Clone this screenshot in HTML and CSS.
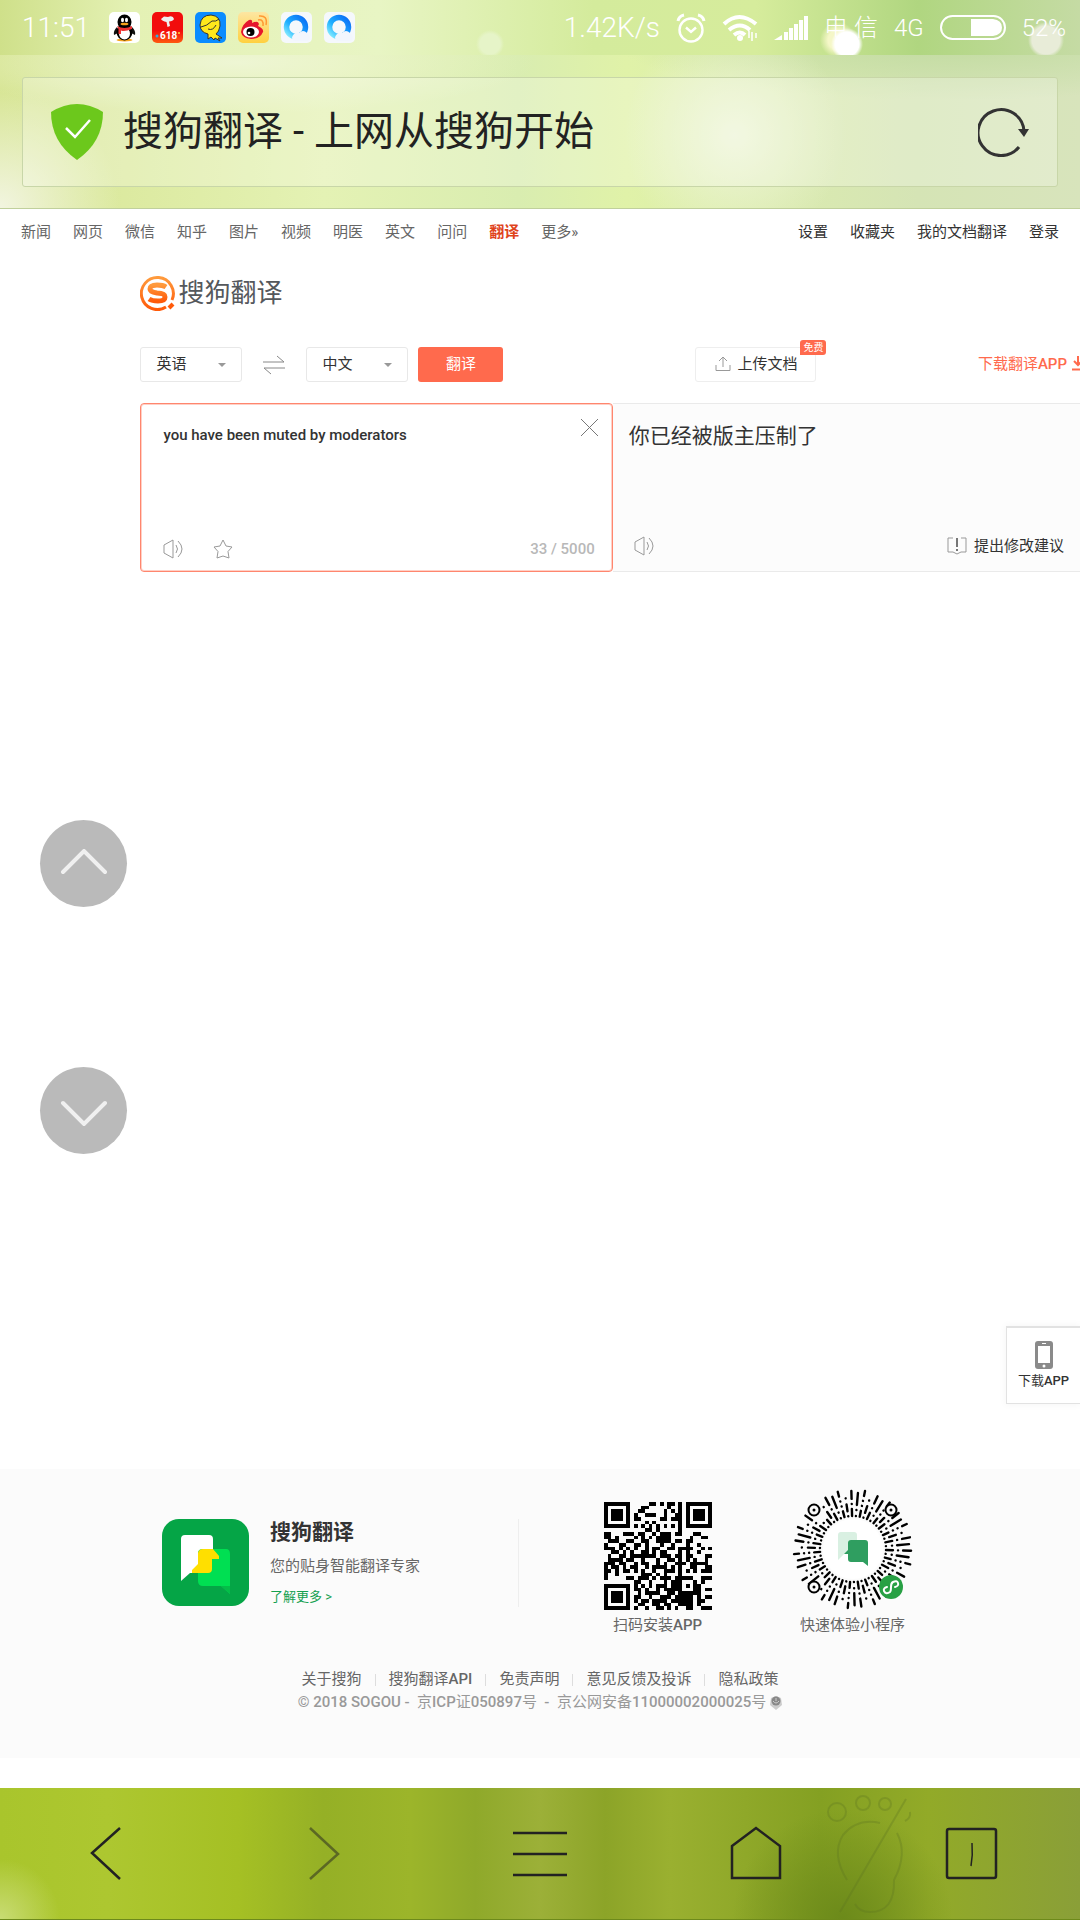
FILE: index.html
```html
<!DOCTYPE html>
<html lang="zh-CN">
<head>
    <meta charset="utf-8">
    <meta name="viewport" content="width=device-width, initial-scale=1">
    <title>搜狗翻译 - 上网从搜狗开始</title>
    <link rel="stylesheet" href="styles.css">
</head>
<body>
    <header class="browser-top">
        <div class="status-bar">
            <span class="clock">11:51</span>
            <div class="app-icons">
                <svg viewBox="0 0 31 31"><rect width="31" height="31" rx="5" fill="#fff"/><ellipse cx="15.5" cy="28" rx="8" ry="1.5" fill="#f5a21b"/><path d="M8 15Q4 19 5 23L9 21M23 15Q27 19 26 23L22 21" fill="#111"/><ellipse cx="15.5" cy="20" rx="8" ry="8.5"/><ellipse cx="15.5" cy="21.5" rx="5.5" ry="6" fill="#fff"/><ellipse cx="15.5" cy="10" rx="7" ry="7.5"/><ellipse cx="13.5" cy="8" rx="1.5" ry="2.2" fill="#fff"/><ellipse cx="17.5" cy="8" rx="1.5" ry="2.2" fill="#fff"/><ellipse cx="15.5" cy="12" rx="4" ry="1.3" fill="#f5a21b"/><path d="M8 14Q15.5 18 23 14V17Q15.5 20 12 18.5V22H9.5V17Z" fill="#e33"/></svg>
                <svg viewBox="0 0 31 31"><defs><linearGradient id="jd" x2="0" y2="1"><stop offset=".6" stop-color="#f20c0c"/><stop offset="1" stop-color="#ff5a10"/></linearGradient></defs><rect width="31" height="31" rx="5" fill="url(#jd)"/><path d="M9 7L12 4.5L16 5Q21 3 22 7Q21 9 17 9.5L18 14L15.5 15L14.5 10Q10 9 9 7Z" fill="#eee"/><text x="8" y="27" class="badge-618">618</text><circle cx="5" cy="24" r="1.5" fill="#3ad"/><circle cx="27" cy="21" r="1" fill="#fd3"/></svg>
                <svg viewBox="0 0 31 31"><rect width="31" height="31" rx="5" fill="#0a8cff"/><path d="M5 13Q6 3 16 3Q26 4 25 14Q24 20 21 22L27 26L23 26L25 29L20 26L19 28L16 25L13 27L13 22Q5 20 5 13Z" fill="#ffe81c" stroke="#333" stroke-width="1"/><path d="M6 15Q12 14 17 9M13 17Q18 19 21 13M17 9Q21 10 24 7" fill="none" stroke="#333"/></svg>
                <svg viewBox="0 0 31 31"><defs><linearGradient id="wb" x2="0" y2="1"><stop stop-color="#fde6a2"/><stop offset="1" stop-color="#ffd040"/></linearGradient></defs><rect width="31" height="31" rx="5" fill="url(#wb)"/><path d="M3 20Q4 12 11 8Q15 7 14 11Q20 8 21 12L20 14Q26 17 25 20Q22 27 13 27Q4 26 3 20Z" fill="#e6162d"/><ellipse cx="13" cy="20" rx="8" ry="5.5" fill="#fff"/><circle cx="12.5" cy="20" r="4"/><circle cx="11" cy="21" r="1.3" fill="#fff"/><path d="M20 8Q26 7 25 14M21 4Q30 3 28 13" fill="none" stroke="#ff9933" stroke-width="1.5"/></svg>
                <svg viewBox="0 0 31 31"><defs><linearGradient id="qb" x1="1" x2="0" y2="1"><stop stop-color="#0a6cf5"/><stop offset=".6" stop-color="#1fb0ff"/><stop offset="1" stop-color="#8ef0ff"/></linearGradient></defs><rect width="31" height="31" rx="5" fill="#f5f8fc"/><circle cx="15" cy="15" r="9.5" fill="none" stroke="url(#qb)" stroke-width="5.5"/><path d="M13 29Q9 26 13 22Q15 20 18 21Q22 17 26 21Q31 24 27 29Z" fill="#f2f6fd"/></svg>
                <svg viewBox="0 0 31 31"><rect width="31" height="31" rx="5" fill="#f5f8fc"/><circle cx="15" cy="15" r="9.5" fill="none" stroke="url(#qb)" stroke-width="5.5"/><path d="M13 29Q9 26 13 22Q15 20 18 21Q22 17 26 21Q31 24 27 29Z" fill="#f2f6fd"/></svg>
            </div>
            <div class="signals">
                <span class="speed">1.42K/s</span>
                <svg width="30" height="30" viewBox="0 0 30 30"><g fill="none" stroke="#fff" stroke-width="2.4"><circle cx="15" cy="17" r="11.5"/><path d="M10 14.5L15 19L20 14.5"/><path d="M2 8Q3 3 8 2M28 8Q27 3 22 2" stroke-width="3"/></g></svg>
                <svg width="36" height="28" viewBox="0 0 36 28"><g fill="none" stroke="#fff" stroke-width="4"><path d="M2 10Q17 -4 34 10"/><path d="M7 16Q18 7 28 16"/><path d="M12 21Q18 16 23 21"/></g><circle cx="18" cy="24" r="3" fill="#fff"/><path d="M27 24V17M30 18V27M34 19V24" stroke="#fff" stroke-width="1.5"/></svg>
                <svg width="34" height="26" viewBox="0 0 34 26" fill="#fff"><path d="M0 25L8 20V25Z"/><path d="M10 17H14V25H10ZM15 13H19V25H15ZM20 9H24V25H20ZM25 5H29V25H25ZM30 1H34V25H30Z"/></svg>
                <span>电 信</span>
                <span>4G</span>
                <svg width="66" height="26" viewBox="0 0 66 26"><rect x="1" y="1" width="64" height="23" rx="11.5" fill="none" stroke="#fff" stroke-width="2"/><path d="M31 4H53Q62 5 62 12.5Q62 20 53 21H31Z" fill="#fff"/></svg>
                <span>52%</span>
            </div>
        </div>
        <div class="address-bar">
            <svg width="52" height="56" viewBox="0 0 52 56"><path d="M0 8Q26 -8 52 8Q52 38 26 56Q0 38 0 8Z" fill="#6cc81c"/><path d="M15 24L24 33L39 16" fill="none" stroke="#fff" stroke-width="2.5"/></svg>
            <h1 class="page-title">搜狗翻译 - 上网从搜狗开始</h1>
            <button class="icon-btn" aria-label="刷新">
                <svg width="52" height="50" viewBox="0 0 52 50"><path d="M46 24A23 23 0 1 0 41 40" fill="none" stroke="#333" stroke-width="3"/><path d="M40 22H51L46 30Z" fill="#333"/></svg>
            </button>
        </div>
    </header>

    <main>
        <nav class="top-nav">
            <div class="nav-group">
                <a href="#">新闻</a>
                <a href="#">网页</a>
                <a href="#">微信</a>
                <a href="#">知乎</a>
                <a href="#">图片</a>
                <a href="#">视频</a>
                <a href="#">明医</a>
                <a href="#">英文</a>
                <a href="#">问问</a>
                <a href="#" class="active">翻译</a>
                <a href="#">更多»</a>
            </div>
            <div class="nav-group account">
                <a href="#">设置</a>
                <a href="#">收藏夹</a>
                <a href="#">我的文档翻译</a>
                <a href="#">登录</a>
            </div>
        </nav>

        <div class="translator">
            <a href="#" class="logo">
                <svg width="36" height="36" viewBox="0 0 36 36"><defs><linearGradient id="so" x2="0" y2="1"><stop stop-color="#ff9a3c"/><stop offset="1" stop-color="#ff5a0a"/></linearGradient></defs><path d="M32 25A16 16 0 1 0 26 32" fill="none" stroke="url(#so)" stroke-width="3"/><path d="M26 12Q23 10 17 10Q10 10 10 14Q10 17 17 18Q25 18 25 22Q25 26 18 26Q12 26 9 24" fill="none" stroke="url(#so)" stroke-width="5"/><path d="M29 33L33 29" stroke="#ff5a0a" stroke-width="4"/></svg>
                <span>搜狗翻译</span>
            </a>

            <div class="toolbar">
                <div class="lang">
                    <select aria-label="源语言"><option>英语</option><option>中文</option></select>
                </div>
                <button class="icon-btn swap" aria-label="交换语言">
                    <svg width="22" height="20" viewBox="0 0 22 20" fill="none" stroke="#888"><path d="M0 7H21L14 1M22 13H1L8 19"/></svg>
                </button>
                <div class="lang">
                    <select aria-label="目标语言"><option>中文</option><option>英语</option></select>
                </div>
                <button class="translate-btn">翻译</button>
                <button class="upload">
                    <svg width="16" height="16" viewBox="0 0 16 16" fill="none" stroke="#999"><path d="M1 9V14.5H15V9M8 11V1.5M4 5L8 1L12 5"/></svg>
                    上传文档
                    <span class="free">免费</span>
                </button>
                <a href="#" class="download">
                    <span>下载翻译<b>APP</b></span>
                    <svg width="12" height="15" viewBox="0 0 12 15"><path d="M6 0V9M2 5L6 9L10 5M0 13.5H12" fill="none" stroke="#ff6a4d" stroke-width="2"/></svg>
                </a>
            </div>

            <div class="panels">
                <section class="panel source">
                    <div class="panel-body">
                        <textarea aria-label="原文">you have been muted by moderators</textarea>
                        <button class="icon-btn" aria-label="清空">
                            <svg width="19" height="19" viewBox="0 0 19 19"><path d="M1 1L18 18M18 1L1 18" stroke="#777"/></svg>
                        </button>
                    </div>
                    <div class="panel-tools">
                        <button class="icon-btn" aria-label="朗读">
                            <svg width="20" height="20" viewBox="0 0 20 20" fill="none" stroke="#999"><path d="M1 6L10 1V19L1 14ZM13 6Q16 10 13 14M15 2Q23 10 15 18"/></svg>
                        </button>
                        <button class="icon-btn" aria-label="收藏">
                            <svg width="20" height="20" viewBox="0 0 20 20" fill="none" stroke="#999"><path d="M10 1L13 7L19 8L15 12.5L16 19L10 17L4 19L5 12.5L1 8L7 7Z"/></svg>
                        </button>
                        <span class="count">33 / 5000</span>
                    </div>
                </section>
                <section class="panel result">
                    <p class="panel-body">你已经被版主压制了</p>
                    <div class="panel-tools">
                        <button class="icon-btn" aria-label="朗读译文">
                            <svg width="20" height="20" viewBox="0 0 20 20" fill="none" stroke="#999"><path d="M1 6L10 1V19L1 14ZM13 6Q16 10 13 14M15 2Q23 10 15 18"/></svg>
                        </button>
                        <a href="#" class="suggest">
                            <svg width="20" height="18" viewBox="0 0 20 18" fill="none" stroke="#999"><path d="M6 1H1V15H6L10 17L14 15H19V1H14"/><path d="M10 1V10M10 12V14" stroke="#777" stroke-width="2"/></svg>
                            提出修改建议
                        </a>
                    </div>
                </section>
            </div>
        </div>
    </main>

    <button class="scroll-btn up" aria-label="向上">
        <svg width="50" height="30" viewBox="0 0 50 30"><path d="M4 23L25 2L46 23"/></svg>
    </button>
    <button class="scroll-btn down" aria-label="向下">
        <svg width="50" height="30" viewBox="0 0 50 30"><path d="M4 7L25 28L46 7"/></svg>
    </button>
    <a href="#" class="app-float">
        <svg width="18" height="28" viewBox="0 0 18 28"><rect width="18" height="28" rx="3" fill="#8a8a8a"/><path d="M3 5H15V22H3Z" fill="#fff"/><path d="M7 2.5H11" stroke="#fff"/><circle cx="9" cy="25" r="1.5" fill="#fff"/></svg>
        <span>下载<b>APP</b></span>
    </a>

    <footer class="site-footer">
        <div class="promo">
            <div class="app-card">
                <svg width="87" height="87" viewBox="0 0 87 87"><rect width="87" height="87" rx="17" fill="#05a546"/><path d="M19 62V20Q19 16 23 16H47Q51 16 51 20V54H28Z" fill="#fff"/><path d="M36 34Q36 30 41 30H64Q68 30 68 35V75L59 67H41Q36 67 36 62Z" fill="#00df52"/><path d="M59 67H68V75Z" fill="#04bd48"/><path d="M36 34Q37 30 41 30H51L57 37V40H50V50Q50 54 46 54H30V51L36 45Z" fill="#ffdf00"/></svg>
                <div class="app-text">
                    <h2>搜狗翻译</h2>
                    <p>您的贴身智能翻译专家</p>
                    <a href="#">了解更多 &gt;</a>
                </div>
            </div>
            <figure>
                <svg id="qr" width="108" height="108" viewBox="0 0 29 29" shape-rendering="crispEdges"></svg>
                <figcaption>扫码安装<b>APP</b></figcaption>
            </figure>
            <figure>
                <svg id="mini" width="122" height="122" viewBox="-61 -61 122 122">
                    <circle r="61" fill="#fff" fill-opacity="0"/>
                    <g id="rays" stroke="#000" stroke-width="2.4" stroke-linecap="round"></g>
                    <circle r="30" fill="#fff"/>
                    <path d="M-15 11V-14Q-15 -17 -12 -17H1Q4 -17 4 -14V4H-8Z" fill="#d9f0e2"/>
                    <path d="M-5 -6Q-5 -9 -2 -9H12Q15 -9 15 -6V17L10 13H-2Q-5 13 -5 10V5H-9L-5 1Z" fill="#2f9e60"/>
                    <g fill="#fbfbfb" stroke="#000" stroke-width="2">
                        <circle cx="-39" cy="-39" r="5.5"/><circle cx="38" cy="-39" r="5.5"/><circle cx="-39" cy="38" r="5.5"/>
                    </g>
                    <circle cx="-39" cy="-39" r="1.5"/><circle cx="38" cy="-39" r="1.5"/><circle cx="-39" cy="38" r="1.5"/>
                    <circle cx="38" cy="38" r="12" fill="#28a044"/>
                    <path d="M34 38Q30 39 31 42Q33 46 37 43Q38 42 38 38Q38 34 40 33Q44 31 45 34Q46 37 42 38" fill="none" stroke="#fff" stroke-width="2" stroke-linecap="round"/>
                </svg>
                <figcaption>快速体验小程序</figcaption>
            </figure>
        </div>
        <div class="footer-links">
            <a href="#">关于搜狗</a>
            <a href="#">搜狗翻译<b>API</b></a>
            <a href="#">免责声明</a>
            <a href="#">意见反馈及投诉</a>
            <a href="#">隐私政策</a>
        </div>
        <p class="copyright">
            <span><b>© 2018 SOGOU -&nbsp;</b> 京<b>ICP</b>证<b>050897</b>号 <b>&nbsp;-&nbsp;</b> 京公网安备<b>11000002000025</b>号</span>
            <svg width="12" height="14" viewBox="0 0 12 14"><path d="M1 2L6 0L11 2L12 9L6 14L0 9Z" fill="#ccc"/><circle cx="6" cy="5" r="4.5" fill="#888"/><path d="M3 5Q6 9 9 5M6 2V5" fill="none" stroke="#ccc"/></svg>
        </p>
    </footer>

    <nav class="browser-bottom">
        <svg class="foot" width="80" height="120" viewBox="0 0 80 120"><circle cx="14" cy="18" r="9"/><circle cx="40" cy="9" r="7"/><circle cx="62" cy="10" r="6"/><path d="M83 5L17 118M57 29Q34 24 20 41Q8 60 24 86M74 39Q85 60 71 86Q72 118 47 118Q36 118 32 110M87 18Q88 24 82 27"/></svg>
        <button class="icon-btn" aria-label="后退"><svg viewBox="0 0 56 56"><path d="M40 2L12 27L40 53"/></svg></button>
        <button class="icon-btn dim" aria-label="前进"><svg viewBox="0 0 56 56"><path d="M14 2L42 28L14 53"/></svg></button>
        <button class="icon-btn" aria-label="菜单"><svg viewBox="0 0 56 56"><path d="M1 7H55M1 28H55M1 49H55"/></svg></button>
        <button class="icon-btn" aria-label="主页"><svg viewBox="0 0 56 56"><path d="M4 20L28 2L52 20V52H4Z"/></svg></button>
        <button class="icon-btn" aria-label="标签页"><svg viewBox="0 0 56 56"><rect x="3" y="3" width="49" height="49" rx="2"/><path d="M28 17Q29 29 27 40" stroke-width="1.5"/></svg></button>
    </nav>
    <script src="script.js"></script>
</body>
</html>
```
FILE: styles.css
```css
* {
    box-sizing: border-box;
}
body {
    margin: 0;
    min-height: 100vh;
    display: flex;
    flex-direction: column;
    position: relative;
    overflow-x: hidden;
    background-color: #fff;
    color: #333;
    font-family: Roboto, "Noto Sans CJK SC", sans-serif;
    font-size: 15px;
    line-height: 20px;
}
h1, h2, p, figure {
    margin: 0;
}
a {
    color: inherit;
    text-decoration: none;
}
b {
    font-weight: 500;
}
svg {
    display: block;
    flex-shrink: 0;
}
button, select, textarea {
    font: inherit;
    color: inherit;
}
.icon-btn {
    padding: 0;
    border: none;
    background: none;
    cursor: pointer;
}

/* Browser chrome, top */
.browser-top {
    padding-bottom: 21px;
    border-bottom: 1px solid #c0d09c;
    background:
        radial-gradient(circle at 68% 65%, #eef5d8 0, transparent 15%),
        radial-gradient(ellipse at 88% 20%, #c1dba0 0, transparent 25%),
        radial-gradient(circle at 0 100%, #f2f5e0 0, transparent 120px),
        radial-gradient(ellipse at 22% 30%, #eef6d4 0, transparent 25%),
        linear-gradient(90deg, #d7e594, #e4f2b4 30%, #d9edb0 48%, #e0f2a8 58%, #d5e4b5 85%, #d8e4bc);
}
.status-bar {
    height: 55px;
    padding: 0 14px 0 22px;
    display: flex;
    align-items: center;
    color: #fff;
    font-size: 24px;
    font-weight: 300;
    background:
        radial-gradient(circle at 847px 44px, #fff 12px, transparent 16px),
        radial-gradient(circle at 838px 40px, #f5f7c8 10px, transparent 18px),
        radial-gradient(circle at 490px 44px, #e6f4c8 10px, transparent 14px),
        radial-gradient(circle at 1046px 40px, #e8ecd8 14px, transparent 18px),
        linear-gradient(90deg, #cfe08a, #e4f1b4 12%, #e8f5c4 35%, #d4eb9c 55%, #d6ec9c 70%, #b0d680 85%, #c5dba4);
}
.clock {
    width: 87px;
}
.clock, .speed {
    font-size: 28px;
}
.app-icons {
    display: flex;
    gap: 12px;
}
.app-icons svg {
    width: 31px;
}
.badge-618 {
    fill: #fff;
    font-size: 10px;
    font-weight: 700;
}
.signals {
    margin-left: auto;
    display: flex;
    align-items: center;
    gap: 16px;
}
.address-bar {
    height: 110px;
    margin: 22px 22px 0;
    padding: 0 27px 0 28px;
    display: flex;
    align-items: center;
    gap: 20px;
    border: 1px solid #c8d6a8;
    border-radius: 3px;
    background-color: rgba(255, 255, 255, 0.25);
}
.page-title {
    flex: 1;
    font-size: 40px;
    line-height: 48px;
    font-weight: 400;
    color: #222;
}

/* Site navigation */
.top-nav {
    height: 46px;
    padding: 0 21px;
    display: flex;
    align-items: center;
    justify-content: space-between;
}
.nav-group {
    display: flex;
    gap: 22px;
    color: #666;
}
.nav-group.account {
    color: #333;
}
.nav-group .active {
    color: #e0431c;
    font-weight: 700;
}

/* Translator */
main {
    flex: 1;
}
.translator {
    padding: 20px 0 0 13%;
}
.logo {
    display: flex;
    align-items: center;
    gap: 2px;
    font-size: 26px;
    line-height: 36px;
    color: #55585c;
}
.toolbar {
    margin: 36px 0 21px;
    display: flex;
    align-items: center;
}
.lang {
    position: relative;
    width: 102px;
}
.lang::after {
    content: "";
    position: absolute;
    right: 16px;
    top: 16px;
    border: 4px solid transparent;
    border-top-color: #999;
    pointer-events: none;
}
.lang select {
    display: block;
    width: 100%;
    height: 35px;
    padding: 0 15px 2px;
    border: 1px solid #e8e8e8;
    border-radius: 3px;
    background-color: #fff;
    appearance: none;
}
.swap {
    margin: 0 21px;
}
.translate-btn {
    width: 85px;
    height: 35px;
    margin-left: 10px;
    padding-bottom: 3px;
    border: none;
    border-radius: 3px;
    background-color: #ff6a4d;
    color: #fff;
}
.upload {
    position: relative;
    height: 35px;
    margin-left: 192px;
    padding: 0 18px 2px 19px;
    display: flex;
    align-items: center;
    gap: 6px;
    border: 1px solid #eee;
    border-radius: 3px;
    background-color: #fff;
}
.free {
    position: absolute;
    top: -8px;
    right: -11px;
    padding: 0 3px;
    border-radius: 3px 3px 3px 0;
    background-color: #ff6a4d;
    color: #fff;
    font-size: 10px;
    line-height: 15px;
}
.download {
    margin: 0 -4px 0 auto;
    padding-bottom: 2px;
    display: flex;
    align-items: center;
    gap: 5px;
    color: #ff6a4d;
}
.panels {
    display: flex;
}
.panel {
    flex: 1 1 0;
    height: 169px;
    display: flex;
    flex-direction: column;
}
.source {
    padding: 14px 13px 12px 22px;
    border: 1px solid #ff866e;
    border-radius: 4px;
    box-shadow: inset 0 0 0 1px #ffd0c6;
}
.result {
    padding: 15px 16px;
    border: solid #eaeaea;
    border-width: 1px 0;
    background-color: #fcfcfc;
}
.panel-body {
    flex: 1;
    display: flex;
    align-items: flex-start;
}
.source textarea {
    flex: 1;
    height: 100px;
    padding: 7px 0 0;
    border: none;
    outline: none;
    resize: none;
    background: none;
    font-weight: 500;
}
.result .panel-body {
    font-size: 21px;
    line-height: 34px;
}
.panel-tools {
    display: flex;
    align-items: center;
    gap: 30px;
}
.source .panel-tools {
    padding-right: 4px;
}
.result .panel-tools {
    padding-left: 5px;
}
.count {
    margin-left: auto;
    color: #b8b8b8;
    font-weight: 500;
}
.suggest {
    margin-left: auto;
    display: flex;
    align-items: center;
    gap: 7px;
}

/* Floating buttons */
.scroll-btn {
    position: absolute;
    left: 40px;
    width: 87px;
    height: 87px;
    padding: 0;
    display: flex;
    align-items: center;
    justify-content: center;
    border: none;
    border-radius: 50%;
    background-color: #bababa;
}
.scroll-btn.up {
    top: 820px;
}
.scroll-btn.down {
    top: 1067px;
}
.scroll-btn path {
    fill: none;
    stroke: #f0f0f0;
    stroke-width: 4;
    stroke-linecap: round;
}
.app-float {
    position: absolute;
    top: 1326px;
    right: 0;
    width: 74px;
    height: 78px;
    padding-top: 13px;
    display: flex;
    flex-direction: column;
    align-items: center;
    gap: 2px;
    border: 2px solid #e2e2e2;
    border-width: 2px 0 1px 1px;
    background-color: #fff;
    font-size: 13px;
    box-shadow: 0 0 8px rgba(0, 0, 0, 0.05);
}

/* Site footer */
.site-footer {
    margin-bottom: 30px;
    padding: 19px 0 44px;
    background-color: #fbfbfb;
    color: #666;
}
.promo {
    margin-bottom: 33px;
    padding-left: 15%;
    display: flex;
    align-items: flex-end;
}
.app-card {
    width: 357px;
    height: 88px;
    margin: 0 41px 28px 0;
    display: flex;
    gap: 21px;
    border-right: 1px solid #eee;
}
.app-text {
    display: flex;
    flex-direction: column;
    gap: 11px;
}
.app-text h2 {
    color: #333;
    font-size: 21px;
    line-height: 26px;
}
.app-text a {
    color: #14a050;
    font-size: 13px;
}
.promo figure {
    width: 195px;
    display: flex;
    flex-direction: column;
    align-items: center;
    gap: 5px;
}
.footer-links {
    display: flex;
    justify-content: center;
    line-height: 23px;
}
.footer-links a {
    display: flex;
    align-items: center;
}
.footer-links a + a::before {
    content: "";
    width: 1px;
    height: 12px;
    margin: 0 13px;
    background-color: #ddd;
}
.copyright {
    display: flex;
    justify-content: center;
    align-items: center;
    gap: 4px;
    color: #999;
    line-height: 23px;
}

/* Browser chrome, bottom */
.browser-bottom {
    position: relative;
    height: 132px;
    display: grid;
    grid-template-columns: repeat(5, 1fr);
    align-items: center;
    justify-items: center;
    border-bottom: 1px solid #6d8a1a;
    background:
        radial-gradient(circle at 0 100%, #c9dc74 0, transparent 60px),
        radial-gradient(circle at 78% 100%, #6c8a1a 0, transparent 110px),
        linear-gradient(90deg, #a9c52c, #adc730 10%, #a5c024 22%, #95b026 30%, #9cb52a 38%, #8fa92a 44%, #9cb038 50%, #8ca428 56%, #9ab030 62%, #84a022 76%, #92aa28 86%, #8a9f38);
}
.browser-bottom .icon-btn svg {
    width: 56px;
    fill: none;
    stroke: #222;
    stroke-width: 2.5;
}
.browser-bottom .dim {
    opacity: 0.5;
}
.foot {
    position: absolute;
    top: 6px;
    left: 823px;
    overflow: visible;
    fill: none;
    stroke: #5c7420;
    stroke-width: 2;
    opacity: 0.3;
}
```
FILE: script.js
```js
var NS = 'http://www.w3.org/2000/svg';

function add(parent, name, attrs) {
    var el = document.createElementNS(NS, name);
    for (var key in attrs) el.setAttribute(key, attrs[key]);
    parent.appendChild(el);
}

// QR code, one string per row
var rows = [
    '#######.....##.#.##.#.#######',
    '#.....#...##.....#..#.#.....#',
    '#.###.#..##.....#.#.#.#.###.#',
    '#.###.#.#..###..#..##.#.###.#',
    '#.###.#.##.....##.###.#.###.#',
    '#.....#....#.#......#.#.....#',
    '#######.#.#.#.#.#.#.#.#######',
    '...........##.#.....#........',
    '##...###.##..#.###.##...##...',
    '##.#....#.#.#.####.....#..##.',
    '.###..##..##..####.##.##.....',
    '#...##..##.#...#..#...#..#...',
    '###.#.#.#..#.##..##.####..#.#',
    '..##.#.#..##.#.##...#.#..#...',
    '.#..##.#######.###.##.##...##',
    '.####.##..#...#..##.#.#.#..#.',
    '###.##..#.##..#.#..###.#####.',
    '#.##.#.##..#.####.#.#..##..##',
    '##.#.##.#.#..#..###.#.#.#.###',
    '#..#......###.#.#...#........',
    '#.....##.###.#.###.#####..###',
    '........##..#...#.###...#.#..',
    '#######.#.#.#.###.###.#.##...',
    '#.....#.##.#..#.#####...##.##',
    '#.###.#..#.####..##.######...',
    '#.###.#.##..#..###.#####.#.##',
    '#.###.#.#.##.####.######.##..',
    '#.....#..##..##.##..####.#...',
    '#######.#..#..##.#.#..##..###'
];
var qr = document.getElementById('qr');
rows.forEach(function (row, y) {
    for (var x = 0; x < row.length; x++) {
        if (row[x] === '#') add(qr, 'rect', { x: x, y: y, width: 1, height: 1 });
    }
});

// mini program code: rays of dots and dashes around the logo
var rays = document.getElementById('rays');
var dashes = [
    [7, 5, 0.1, 5, 8, 20],
    [0.1, 5, 7, 6, 0.1, 20],
    [8, 6, 7, 20],
    [6, 5, 0.1, 5, 0.1, 5, 5, 20],
    [10, 5, 0.1, 20],
    [0.1, 6, 0.1, 5, 12, 20],
    [7, 5, 9, 5, 0.1, 20]
];
var eyes = [[-39, -39], [38, -39], [-39, 38]];
for (var i = 0; i < 54; i++) {
    var a = i * Math.PI / 27 + 0.03;
    var dx = Math.cos(a), dy = Math.sin(a);
    var nearEye = eyes.some(function (e) {
        return Math.abs(dx * 55 - e[0]) < 4 && Math.abs(dy * 55 - e[1]) < 4;
    });
    var end = nearEye ? 44 : 60;
    add(rays, 'line', {
        x1: 33 * dx, y1: 33 * dy, x2: end * dx, y2: end * dy,
        'stroke-dasharray': dashes[(i * 5 + (i >> 2)) % 7].join(' ')
    });
}
```
